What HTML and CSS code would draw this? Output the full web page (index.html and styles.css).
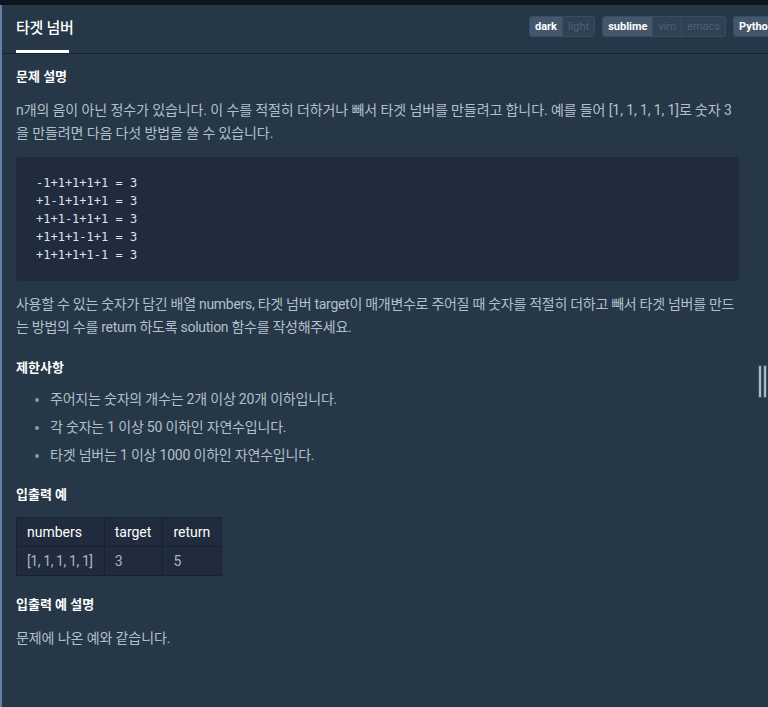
FILE: index.html
```html
<!doctype html>
<html lang="ko">
<head>
    <meta charset="UTF-8">
    <meta name="viewport" content="width=device-width, initial-scale=1.0">
    <title>타겟 넘버</title>
    <link rel="stylesheet" href="styles.css">
</head>

<body>
    <div id="top-bar"></div>

    <div id="page">
        <div id="page-header">
            <div class="tab active">타겟 넘버</div>
            <div class="toggles">
                <div class="toggle-group">
                    <span class="toggle on">dark</span><span class="toggle">light</span>
                </div>
                <div class="toggle-group">
                    <span class="toggle on">sublime</span><span class="toggle">vim</span><span class="toggle">emacs</span>
                </div>
                <div class="toggle-group">
                    <span class="toggle on">Python</span>
                </div>
            </div>
        </div>

        <div id="content">
            <h6>문제 설명</h6>
            <p>n개의 음이 아닌 정수가 있습니다. 이 수를 적절히 더하거나 빼서 타겟 넘버를 만들려고 합니다. 예를 들어 [1, 1, 1, 1, 1]로 숫자 3을 만들려면 다음 다섯 방법을 쓸 수 있습니다.</p>
<pre><code>-1+1+1+1+1 = 3
+1-1+1+1+1 = 3
+1+1-1+1+1 = 3
+1+1+1-1+1 = 3
+1+1+1+1-1 = 3</code></pre>
            <p class="tight">사용할 수 있는 숫자가 담긴 배열 numbers, 타겟 넘버 target이 매개변수로 주어질 때 숫자를 적절히 더하고 빼서 타겟 넘버를 만드는 방법의 수를 return 하도록 solution 함수를 작성해주세요.</p>

            <h6>제한사항</h6>
            <ul>
                <li>주어지는 숫자의 개수는 2개 이상 20개 이하입니다.</li>
                <li>각 숫자는 1 이상 50 이하인 자연수입니다.</li>
                <li>타겟 넘버는 1 이상 1000 이하인 자연수입니다.</li>
            </ul>

            <h6>입출력 예</h6>
            <table>
                <thead>
                    <tr><th>numbers</th><th>target</th><th>return</th></tr>
                </thead>
                <tbody>
                    <tr><td>[1, 1, 1, 1, 1]</td><td>3</td><td>5</td></tr>
                </tbody>
            </table>

            <h6>입출력 예 설명</h6>
            <p>문제에 나온 예와 같습니다.</p>
        </div>

        <!-- splitter grip on the right edge -->
        <div id="grip"><span></span><span></span></div>
    </div>
</body>
</html>
```

FILE: styles.css
```css
body {
    font-family: Roboto, "Noto Sans CJK KR", sans-serif;
    margin: 0;
    background-color: #263747;
    color: #b2c0cc;
    overflow: hidden;
}
#top-bar {
    height: 5px;
    background: #0c151c;
}
#page {
    position: relative;
    min-height: 702px;
    border-left: 2px solid #6381a3;
    box-sizing: border-box;
}
#page-header {
    display: flex;
    justify-content: space-between;
    align-items: flex-start;
    height: 48px;
    border-bottom: 1px solid #172334;
    padding-left: 14px;
}
.tab {
    color: #fff;
    font-size: 15px;
    font-weight: 500;
    line-height: 22px;
    padding-top: 12px;
    border-bottom: 3px solid #fff;
    box-sizing: border-box;
    height: 48px;
    width: 53px;
    white-space: nowrap;
    letter-spacing: -0.3px;
}
.toggles {
    display: flex;
    gap: 7px;
    padding-top: 11px;
    margin-right: -12px;
}
.toggle-group {
    display: flex;
    border: 1px solid #3a4c60;
    border-radius: 3px;
    overflow: hidden;
    background: #2f4155;
}
.toggle {
    font-size: 11px;
    line-height: 19px;
    padding: 0 5px;
    color: #4d6177;
    border-left: 1px solid #3a4c60;
}
.toggle:first-child {
    border-left: none;
}
.toggle.on {
    background: #44576c;
    color: #fff;
    font-weight: 700;
}
#content {
    padding: 12px 29px 20px 14px;
}
h6 {
    color: #fff;
    font-size: 13px;
    font-weight: 700;
    margin: 18px 0 11px;
    line-height: 22px;
}
h6:first-child {
    margin-top: 0;
}
p {
    font-size: 14px;
    line-height: 23px;
    margin: 0 0 12px;
    letter-spacing: -0.1px;
}
p.tight {
    letter-spacing: -0.28px;
}
pre {
    background: #202b3d;
    border-radius: 4px;
    margin: 0 0 12px;
    padding: 17px 20px;
}
code {
    font-family: "DejaVu Sans Mono", monospace;
    font-size: 12px;
    line-height: 18px;
    color: #dde4ea;
}
ul {
    margin: -5px 0 -3px;
    padding-left: 34px;
}
li {
    font-size: 14px;
    line-height: 28px;
    letter-spacing: -0.2px;
}
li::marker {
    color: #8a9bab;
}
table {
    border-collapse: collapse;
    background: #202b3d;
    font-size: 14px;
    margin: 0;
}
th, td {
    border: 1px solid #172334;
    padding: 3px 11px 3px 10px;
    line-height: 22px;
    text-align: left;
    font-weight: 400;
}
th {
    color: #fff;
}
td {
    color: #a9b7c4;
    letter-spacing: -0.4px;
}
#grip {
    position: absolute;
    right: 1px;
    top: 360px;
    display: flex;
    gap: 1px;
}
#grip span {
    width: 2px;
    height: 31px;
    background: #aab8c6;
    border: 1px solid #3c5066;
}
```
